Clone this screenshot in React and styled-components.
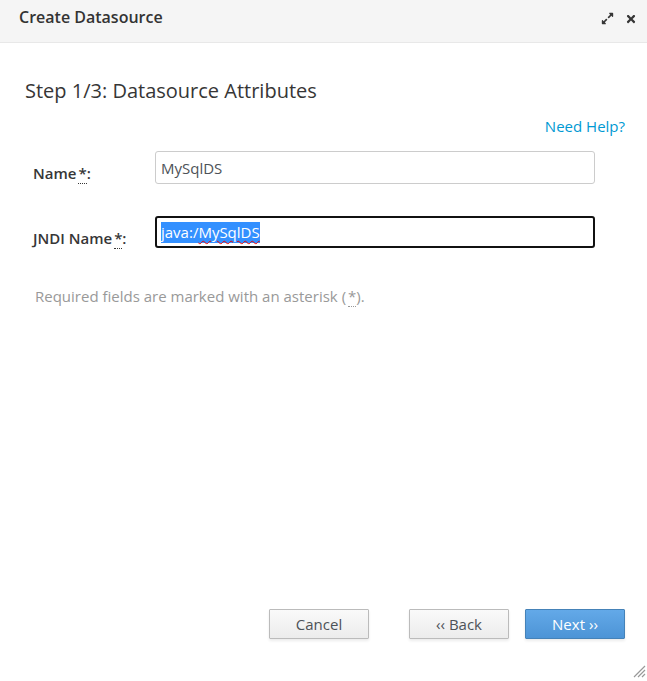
import styled, { createGlobalStyle } from 'styled-components';
import { FaExpandAlt, FaTimes } from 'react-icons/fa';

const GlobalStyle = createGlobalStyle`
  html, body {
    margin: 0;
    padding: 0;
    background: #fff;
  }
  body {
    font-family: 'Open Sans', 'Noto Sans', sans-serif;
    color: #363636;
  }
`;

const Dialog = styled.div`
  position: relative;
  width: 647px;
  height: 681px;
  display: flex;
  flex-direction: column;
  background: #fff;
  overflow: hidden;
`;

const Header = styled.div`
  height: 43px;
  box-sizing: border-box;
  display: flex;
  align-items: flex-start;
  justify-content: space-between;
  padding: 6px 10px 0 19px;
  background: #f5f5f5;
  border-bottom: 1px solid #e8e8e8;
`;

const Title = styled.h1`
  margin: 0;
  font-family: 'Open Sans', sans-serif;
  font-size: 16px;
  font-weight: 600;
  line-height: 22px;
  color: #333;
`;

const Tools = styled.div`
  display: flex;
  align-items: center;
  gap: 11px;
  padding-top: 6px;
  color: #363636;
`;

const Body = styled.div`
  flex: 1;
  display: flex;
  flex-direction: column;
  padding: 34px 22px 0 25px;
`;

const StepTitle = styled.h2`
  margin: 0;
  font-size: 20px;
  font-weight: 400;
  line-height: 28px;
  color: #363636;
`;

const HelpRow = styled.div`
  display: flex;
  justify-content: flex-end;
  margin-top: 11px;
`;

const HelpLink = styled.a`
  font-size: 15px;
  line-height: 21px;
  color: #0099d3;
  text-decoration: none;
  cursor: pointer;
`;

const Form = styled.div`
  display: grid;
  grid-template-columns: 122px 440px;
  row-gap: 32px;
  margin-top: 14px;
  padding-left: 8px;
`;

const Label = styled.label`
  padding-top: 12px;
  font-size: 15px;
  font-weight: 600;
  line-height: 21px;
  color: #363636;
`;

const Req = styled.abbr`
  text-decoration: none;
  border-bottom: 1px dotted currentColor;
  margin-left: 2px;
`;

const Field = styled.div`
  box-sizing: border-box;
  height: ${p => (p.$focused ? '32px' : '33px')};
  display: flex;
  align-items: center;
  padding: 0 ${p => (p.$focused ? '4px' : '5px')};
  border: ${p => (p.$focused ? '2px solid #111' : '1px solid #ccc')};
  border-radius: 3px;
  background: #fff;
  font-size: 15px;
  color: #4d5258;
  white-space: nowrap;
`;

const Selected = styled.span`
  background: #3390ff;
  color: #fff;
  line-height: 21px;
`;

const Misspelled = styled.span`
  text-decoration: underline wavy #e00;
  text-decoration-thickness: 1px;
  text-underline-offset: 2px;
`;

const Note = styled.p`
  margin: 37px 0 0 10px;
  font-size: 15px;
  line-height: 21px;
  color: #999;
`;

const Footer = styled.div`
  display: flex;
  justify-content: flex-end;
  align-items: center;
  padding: 0 22px 42px 0;
`;

const Button = styled.button`
  box-sizing: border-box;
  width: 100px;
  height: 30px;
  margin-left: ${p => p.$gap || 0}px;
  font-family: 'Open Sans', sans-serif;
  font-size: 15px;
  cursor: pointer;
  border-radius: 1px;
  border: 1px solid ${p => (p.$primary ? '#4582b8' : '#bbb')};
  color: ${p => (p.$primary ? '#fff' : '#4d5258')};
  background: ${p =>
    p.$primary
      ? 'linear-gradient(#63a9e8, #4d94d6)'
      : 'linear-gradient(#fafafa, #ececec)'};
  box-shadow: 0 2px 3px rgba(0, 0, 0, 0.08);
`;

const Grip = styled.svg`
  position: absolute;
  right: 1px;
  bottom: 3px;
`;

const App = () => {
  return (
    <Dialog>
      <GlobalStyle />
      <Header>
        <Title>Create Datasource</Title>
        <Tools>
          <FaExpandAlt size={13} />
          <FaTimes size={12} />
        </Tools>
      </Header>
      <Body>
        <StepTitle>Step 1/3: Datasource Attributes</StepTitle>
        <HelpRow>
          <HelpLink>Need Help?</HelpLink>
        </HelpRow>
        <Form>
          <Label>
            Name<Req title='Required'>*</Req>:
          </Label>
          <Field>MySqlDS</Field>
          <Label>
            JNDI Name<Req title='Required'>*</Req>:
          </Label>
          <Field $focused>
            <Selected>
              java:/<Misspelled>MySqlDS</Misspelled>
            </Selected>
          </Field>
        </Form>
        <Note>
          Required fields are marked with an asterisk (<Req title='Required'>*</Req>).
        </Note>
      </Body>
      <Footer>
        <Button>Cancel</Button>
        <Button $gap={40}>‹‹ Back</Button>
        <Button $gap={16} $primary>
          Next ››
        </Button>
      </Footer>
      <Grip width='14' height='14' viewBox='0 0 14 14'>
        <path d='M13 2 L2 13 M13 6 L6 13 M13 10 L10 13' stroke='#999' strokeWidth='1.2' />
      </Grip>
    </Dialog>
  );
};

export default App;
